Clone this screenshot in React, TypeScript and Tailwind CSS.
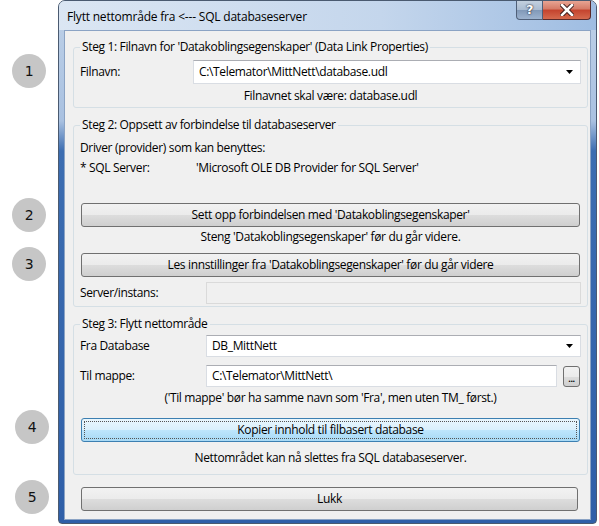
import React from "react";

function Circle({ n, className }: { n: number; className: string }) {
  return (
    <div
      className={`flex h-[34px] w-[34px] items-center justify-center rounded-full bg-[#c6c6c6] font-['DejaVu_Sans',sans-serif] text-[14px] text-[#111] ${className}`}
    >
      {n}
    </div>
  );
}

function Button({ label, focused, className = "" }: { label: string; focused?: boolean; className?: string }) {
  if (focused) {
    return (
      <div
        className={`relative flex h-[24px] items-center justify-center rounded-[3px] border border-[#3c7fb1] bg-[linear-gradient(#eaf6fd_0%,#d9f0fc_50%,#bee6fd_50%,#a7d9f5_100%)] ${className}`}
      >
        <div className="absolute inset-[2px] border border-dotted border-[#555]" />
        <span>{label}</span>
      </div>
    );
  }
  return (
    <div
      className={`flex h-[24px] items-center justify-center rounded-[3px] border border-[#707070] bg-[linear-gradient(#f2f2f2_0%,#ebebeb_50%,#dddddd_50%,#cfcfcf_100%)] ${className}`}
    >
      {label}
    </div>
  );
}

function Combo({ value, className = "" }: { value: string; className?: string }) {
  return (
    <div className={`flex items-center justify-between border border-[#d9dde3] border-t-[#abadb3] bg-white pl-[5px] pr-[7px] ${className}`}>
      <span>{value}</span>
      <svg width="7" height="4" viewBox="0 0 7 4">
        <path d="M0 0h7L3.5 4z" fill="#000" />
      </svg>
    </div>
  );
}

function Group({ title, children, className = "" }: { title: string; children: React.ReactNode; className?: string }) {
  return (
    <fieldset className={`mx-0 rounded-[3px] border border-[#d5dfe5] px-[6px] ${className}`}>
      <legend className="px-[2px] leading-[16px]">{title}</legend>
      {children}
    </fieldset>
  );
}

export default function App() {
  return (
    <div className="flex h-[526px] w-[599px] bg-white font-['Segoe_UI','Open_Sans',sans-serif] text-[12px] tracking-[-0.35px] text-black">
      <div className="flex w-[58px] flex-col">
        <Circle n={1} className="ml-[12px] mt-[54px]" />
        <Circle n={2} className="ml-[12px] mt-[110px]" />
        <Circle n={3} className="ml-[12px] mt-[15px]" />
        <Circle n={4} className="ml-[15px] mt-[129px]" />
        <Circle n={5} className="ml-[15px] mt-[36px]" />
      </div>

      <div className="flex h-[524px] w-[539px] flex-col rounded-t-[7px] rounded-b-[4px] border border-[#4a5a70] bg-[linear-gradient(180deg,#c9d9ec_0px,#b9cde6_30px,#a9c1e1_120px,#3c6db1_150px,#2f5fa8_520px)] px-[5px] pb-[3px]">
        <div className="-mx-[5px] flex h-[29px] shrink-0 items-start justify-between rounded-t-[6px] bg-[linear-gradient(90deg,#dbe6f3,#c4d6ec_60%,#9fbde2)] pl-[8px] pr-[5px]">
          <span className="mt-[7px] text-[12px] tracking-[-0.2px]">Flytt nettområde fra &lt;--- SQL databaseserver</span>
          <div className="flex">
            <div className="flex h-[19px] w-[27px] items-center justify-center rounded-bl-[4px] border border-t-0 border-[#4f5f78] bg-[linear-gradient(#c3d0df_0%,#a9bbd1_50%,#8098b7_50%,#9db3cf_100%)] font-['DejaVu_Sans',sans-serif] text-[13px] font-bold text-white [text-shadow:0_0_1px_#223,0_0_2px_#223]">
              ?
            </div>
            <div className="flex h-[19px] w-[48px] items-center justify-center rounded-br-[4px] border border-l-0 border-t-0 border-[#5a2a2a] bg-[linear-gradient(#e8a493_0%,#d57a66_45%,#c4432e_50%,#d56a4e_100%)]">
              <svg width="14" height="12" viewBox="0 0 14 12">
                <path d="M2 1l10 10M12 1L2 11" stroke="#3a1a1a" strokeWidth="4.5" strokeLinecap="square" />
                <path d="M2 1l10 10M12 1L2 11" stroke="#fff" strokeWidth="2.6" strokeLinecap="square" />
              </svg>
            </div>
          </div>
        </div>

        <div className="flex flex-1 flex-col border border-[#8ba3c4] bg-[#f0f0f0] pl-[8px] pr-[2px]">
          <Group title="Steg 1: Filnavn for 'Datakoblingsegenskaper' (Data Link Properties)" className="mt-[8px] pb-[3px]">
            <div className="mt-[5px] flex h-[24px] items-center">
              <span className="w-[113px]">Filnavn:</span>
              <Combo value="C:\Telemator\MittNett\database.udl" className="h-[24px] flex-1" />
            </div>
            <div className="mt-[4px] text-center leading-[16px]">Filnavnet skal være: database.udl</div>
          </Group>

          <Group title="Steg 2: Oppsett av forbindelse til databaseserver" className="mt-[9px] pb-[2px]">
            <div className="mt-[7px] leading-[16px]">Driver (provider) som kan benyttes:</div>
            <div className="mt-[4px] flex leading-[16px]">
              <span className="w-[116px]">* SQL Server:</span>
              <span>'Microsoft OLE DB Provider for SQL Server'</span>
            </div>
            <Button label="Sett opp forbindelsen med 'Datakoblingsegenskaper'" className="mx-[1px] mt-[27px]" />
            <div className="mt-[2px] text-center leading-[16px]">Steng 'Datakoblingsegenskaper' før du går videre.</div>
            <Button label="Les innstillinger fra 'Datakoblingsegenskaper' før du går videre" className="mx-[1px] mt-[8px]" />
            <div className="mt-[5px] flex h-[22px] items-center">
              <span className="w-[126px]">Server/instans:</span>
              <div className="h-[22px] flex-1 border border-[#dadada] bg-[#f0f0f0]" />
            </div>
          </Group>

          <Group title="Steg 3: Flytt nettområde" className="mt-[9px] pb-[8px]">
            <div className="mt-[3px] flex h-[22px] items-center">
              <span className="w-[126px]">Fra Database</span>
              <Combo value="DB_MittNett" className="h-[22px] flex-1" />
            </div>
            <div className="mt-[8px] flex h-[22px] items-center">
              <span className="w-[126px]">Til mappe:</span>
              <div className="flex h-[22px] flex-1 items-center border border-[#d9dde3] border-t-[#abadb3] bg-white pl-[5px]">
                C:\Telemator\MittNett\
              </div>
              <div className="ml-[6px] mr-[1px] flex h-[21px] w-[17px] items-end justify-center rounded-[3px] border border-[#707070] bg-[linear-gradient(#f2f2f2_0%,#ebebeb_50%,#dddddd_50%,#cfcfcf_100%)] pb-[3px] text-[9px] font-bold leading-none">
                ...
              </div>
            </div>
            <div className="mt-[3px] text-center leading-[16px]">('Til mappe' bør ha samme navn som 'Fra', men uten TM_ først.)</div>
            <Button label="Kopier innhold til filbasert database" focused className="mx-[1px] mt-[12px]" />
            <div className="mt-[8px] text-center leading-[16px]">Nettområdet kan nå slettes fra SQL databaseserver.</div>
          </Group>

          <Button label="Lukk" className="ml-[8px] mr-[10px] mt-[12px] h-[23px]" />
        </div>
      </div>
    </div>
  );
}
